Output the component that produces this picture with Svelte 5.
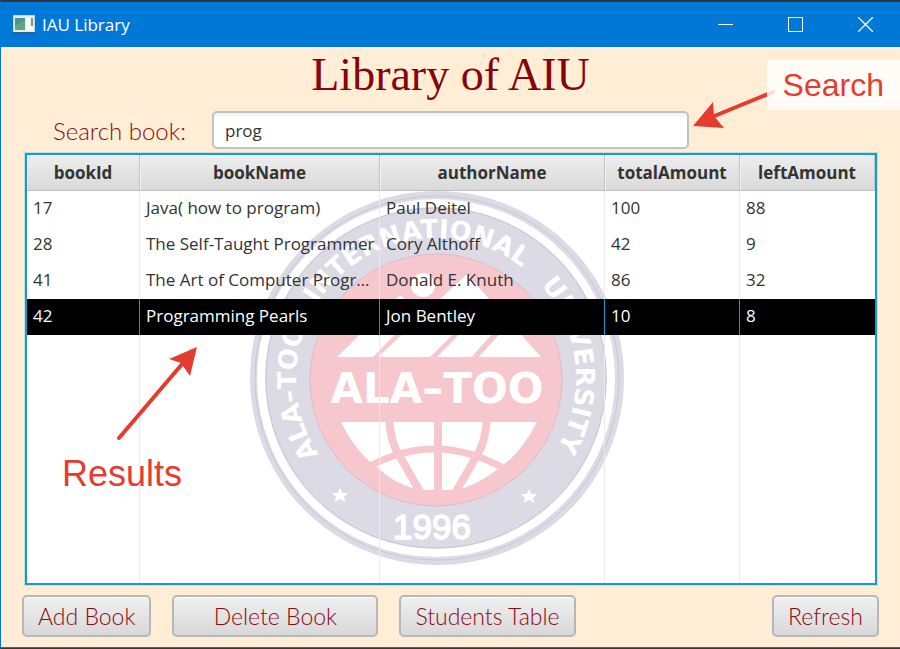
<script>
  const columns = ['bookId', 'bookName', 'authorName', 'totalAmount', 'leftAmount'];
  const books = [
    [17, 'Java( how to program)', 'Paul Deitel', 100, 88],
    [28, 'The Self-Taught Programmer', 'Cory Althoff', 42, 9],
    [41, 'The Art of Computer Programming', 'Donald E. Knuth', 86, 32],
    [42, 'Programming Pearls', 'Jon Bentley', 10, 8]
  ];
  let query = $state('prog');
  let selected = $state(42);
</script>

<div class="window">
  <header class="titlebar">
    <svg class="app-icon" width="22" height="19" viewBox="0 0 22 19" aria-hidden="true">
      <rect width="22" height="18" fill="#e9eaec" stroke="#b8bcc0" />
      <rect y="17" width="22" height="2" fill="#2b6396" />
      <rect x="2" y="3" width="10" height="12" fill="#4f8f96" />
      <path d="M2 15V11L12 5V15Z" fill="#5da878" />
      <rect x="13" y="3" width="4" height="7" fill="#f8f8f8" />
      <rect x="18" y="3" width="2" height="8" fill="#6aa888" />
      <rect x="13" y="11" width="7" height="4" fill="#fafafa" />
    </svg>
    <span class="caption">IAU Library</span>
    <button class="sys" aria-label="Minimize"><svg width="15" height="15"><path d="M0 7.500H15" /></svg></button>
    <button class="sys" aria-label="Maximize"><svg width="15" height="15"><rect x=".5" y=".5" width="14" height="14" /></svg></button>
    <button class="sys" aria-label="Close"><svg width="15" height="15"><path d="M0 0L15 15M15 0L0 15" stroke-width="1.3" /></svg></button>
  </header>

  <main>
    <h1>Library of AIU</h1>
    <div class="search">
      <label for="query">Search book:</label>
      <input id="query" type="text" bind:value={query} />
    </div>

    <div class="grid">
      <svg class="emblem" width="374" height="376" viewBox="250 191 374 376" aria-hidden="true">
        <defs>
          <path id="ring" d="M436 519A140 140 0 0 1 436 239A140 140 0 0 1 436 519" />
        </defs>
        <circle cx="437" cy="379" r="187" fill="#dcdae4" />
        <circle cx="437" cy="379" r="182" fill="none" stroke="#c9c7d6" />
        <circle cx="436" cy="379" r="175" fill="none" stroke="#fff" stroke-width="8" />
        <circle cx="436" cy="379" r="170" fill="none" stroke="#cbc9d8" />
        <circle cx="436" cy="381" r="126" fill="#f6c8cd" stroke="#dcbcc8" />
        <g class="ring-text">
          <text><textPath href="#ring" startOffset="23.3%">ALA–TOO</textPath></text>
          <text><textPath href="#ring" startOffset="47.2%">INTERNATIONAL</textPath></text>
          <text><textPath href="#ring" startOffset="73.4%">UNIVERSITY</textPath></text>
        </g>
        <g fill="#fff">
          <circle cx="423" cy="286" r="12" />
          <path d="M337 358L400 296L408 303L418 312L373 358Z" />
          <path d="M378 358L467 275L484 305L430 358Z" />
          <path d="M437 358L484 310L493 334L472 358Z" />
          <path d="M467 275L541 358H478L500 334L480 310Z" />
          <path d="M341 423H537C526 444 515 458 500 468C487 479 475 485 464 489L453 491H422L412 489C398 484 389 479 378 469C362 458 350 441 341 423Z" />
          <path d="M340 489L342.500 494H348L344 498L345.500 503L340 500L334.500 503L336 498L332 494H337.500Z" />
          <path d="M529 490L531.500 495H537L533 499L534.500 504L529 501L523.500 504L525 499L521 495H526.500Z" />
        </g>
        <g fill="none" stroke="#f6c8cd" stroke-width="8">
          <path d="M372 466Q438 432 505 470" stroke-width="7" />
          <path d="M438 420V494" />
          <path d="M389 420Q391 445 400 458L422 496" />
          <path d="M487 420Q485 445 476 458L454 496" />
          <path d="M475 358L497 334" stroke-width="5" />
        </g>
        <text class="name" x="437" y="404">ALA–TOO</text>
        <text class="year" x="432" y="540">1996</text>
      </svg>

      <table>
        <colgroup>
          <col class="c-id" /><col class="c-name" /><col class="c-author" /><col class="c-total" /><col class="c-left" />
        </colgroup>
        <thead>
          <tr>{#each columns as column}<th scope="col">{column}</th>{/each}</tr>
        </thead>
        <tbody>
          {#each books as book}
            <tr class:selected={selected === book[0]} onclick={() => (selected = book[0])}>
              {#each book as value}<td>{value}</td>{/each}
            </tr>
          {/each}
          <tr class="filler">{#each columns as column}<td></td>{/each}</tr>
        </tbody>
      </table>
    </div>

    <div class="actions">
      <button>Add Book</button>
      <button class="wide">Delete Book</button>
      <button>Students Table</button>
      <button class="last">Refresh</button>
    </div>
  </main>

  <svg class="arrow to-search" width="86" height="42" viewBox="0 0 86 42" aria-hidden="true">
    <path d="M80 4L19 29" stroke="#e63c30" stroke-width="4" stroke-linecap="round" />
    <path d="M0 38L20 14L21 28L31 40Z" fill="#e63c30" />
  </svg>
  <span class="note search-note">Search</span>
  <svg class="arrow to-results" width="84" height="96" viewBox="0 0 84 96" aria-hidden="true">
    <path d="M4 91L68 16" stroke="#e63c30" stroke-width="4" stroke-linecap="round" />
    <path d="M82 0L54 12L66 16L75 29Z" fill="#e63c30" />
  </svg>
  <span class="note results-note">Results</span>
</div>

<style>
  :global(body) {
    background: #303235;
  }
  .window {
    position: relative;
    display: flex;
    flex-direction: column;
    box-sizing: border-box;
    height: 100vh;
    border-left: 1px solid #0078d7;
    border-top: 2px solid #33373b;
    border-bottom: 1px solid #33373b;
    background: #ffeed5;
    box-shadow: inset 0 -1px #0078d7;
    font-family: "Noto Sans", sans-serif;
  }
  .titlebar {
    display: flex;
    align-items: center;
    height: 45px;
    flex: none;
    padding-left: 12px;
    background: #0078d7;
    color: #fff;
  }
  .caption {
    flex: 1;
    margin-left: 7px;
    font: 17px "Open Sans", sans-serif;
  }
  .sys {
    display: grid;
    place-items: center;
    width: 70px;
    height: 100%;
    padding: 0;
    border: 0;
    background: none;
  }
  .sys svg {
    fill: none;
    stroke: #fff;
  }
  main {
    flex: 1;
    display: flex;
    flex-direction: column;
    padding: 0 24px 11px 21px;
  }
  h1 {
    margin: 0;
    padding: 2px 0 0 3px;
    height: 62px;
    color: #84060a;
    font: 46px/52px "Liberation Serif", serif;
    text-align: center;
  }
  .search {
    display: flex;
    align-items: center;
    height: 38px;
    padding-left: 31px;
    margin-bottom: 4px;
  }
  label {
    width: 159px;
    color: #8b0a10;
    font: 24px "Lato", sans-serif;
    font-weight: 300;
  }
  input {
    box-sizing: border-box;
    width: 58%;
    height: 38px;
    padding: 0 11px;
    border: 2px solid #c4c2bf;
    border-radius: 5px;
    background: linear-gradient(#f1f1f1, #fff 6px);
    color: #333;
    font: 17px "Open Sans", sans-serif;
    outline: 0;
  }
  .grid {
    position: relative;
    flex: 1;
    display: flex;
    margin: 0 -1px 0 3px;
    border: 2px solid #159ccc;
    background: #fff;
    box-shadow: 0 0 0 1px #c6dfdd;
  }
  .emblem {
    position: absolute;
    left: 223px;
    top: 35px;
  }
  .ring-text text,
  .name,
  .year {
    fill: #fff;
    font: bold 26px "DejaVu Sans", sans-serif;
    text-anchor: middle;
  }
  .name {
    font-size: 42px;
  }
  .year {
    font: 35px "Liberation Sans", sans-serif;
    stroke: #fff;
    stroke-width: 1.5;
  }
  table {
    position: relative;
    width: 100%;
    height: 100%;
    border-collapse: separate;
    border-spacing: 0;
    table-layout: fixed;
    color: #333;
    font: 17px "Open Sans", sans-serif;
  }
  .c-id {
    width: 113px;
  }
  .c-name {
    width: 240px;
  }
  .c-author {
    width: 225px;
  }
  .c-total {
    width: 135px;
  }
  th {
    box-sizing: border-box;
    height: 36px;
    padding: 0;
    border-right: 1px solid #c4c4c4;
    border-bottom: 1px solid #c0c0c0;
    background: linear-gradient(#eee, #d9d9d9);
    box-shadow: inset 1px 1px #f5f5f5;
  }
  td {
    box-sizing: border-box;
    height: 36px;
    padding: 0 0 4px 6px;
    border-right: 1px solid #ebebeb;
    overflow: hidden;
    text-overflow: ellipsis;
    white-space: nowrap;
  }
  td:last-child {
    border-right: 0;
  }
  .selected td {
    background: #000;
    border-color: #159ccc;
    color: #fff;
  }
  .filler td {
    height: auto;
  }
  .actions {
    display: flex;
    gap: 21px;
    margin-top: 10px;
  }
  .actions button {
    height: 42px;
    padding: 0 14px;
    border: 2px solid #b7b7b9;
    border-radius: 5px;
    background: linear-gradient(#f0f0f0, #d8d8d8);
    box-shadow: inset 0 1px #fafafa;
    color: #8b0a10;
    font: 23px "Lato", sans-serif;
    font-weight: 300;
  }
  .actions .wide {
    width: 206px;
  }
  .actions .last {
    margin-left: auto;
    margin-right: -3px;
  }
  .arrow,
  .note {
    position: absolute;
    pointer-events: none;
  }
  .note {
    color: #e63c30;
    font: 32px "Liberation Sans", sans-serif;
  }
  .to-search {
    right: 121px;
    top: 86px;
  }
  .search-note {
    right: 0;
    top: 58px;
    padding: 0 16px;
    border-radius: 3px 0 0 3px;
    background: rgb(255 255 255 / 82%);
    line-height: 50px;
  }
  .to-results {
    left: 114px;
    top: 345px;
  }
  .results-note {
    left: 61px;
    top: 451px;
    font-size: 36px;
  }
</style>
